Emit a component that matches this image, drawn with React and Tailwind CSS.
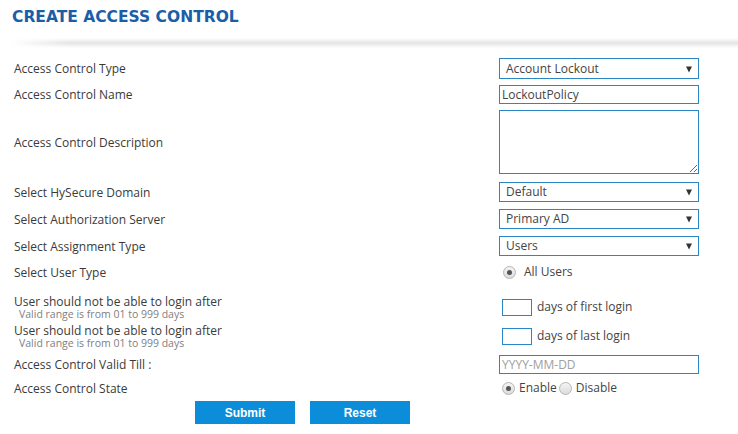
import React from "react";

const font = { fontFamily: "'Open Sans', 'Noto Sans', sans-serif" };

function Caret() {
  return (
    <svg width="8" height="8" viewBox="0 0 8 8" className="shrink-0">
      <path d="M1 1.5 H7 L4 7.5 Z" fill="#333" />
    </svg>
  );
}

function Select({ value }) {
  return (
    <div className="w-[200px] h-full border border-[#2b87c4] bg-white flex items-center justify-between pl-[6px] pr-[5px] text-[12px] text-[#444]">
      <span>{value}</span>
      <Caret />
    </div>
  );
}

function Radio({ checked }) {
  return (
    <span className="inline-flex w-[13px] h-[13px] rounded-full border border-[#b5b5b5] bg-gradient-to-b from-[#f4f4f4] to-[#dcdcdc] items-center justify-center shrink-0">
      {checked && <span className="w-[5px] h-[5px] rounded-full bg-[#555]" />}
    </span>
  );
}

function Row({ top, h, label, hint, children }) {
  return (
    <div className="flex items-center" style={{ marginTop: top, height: h }}>
      <div className="w-[499px] pl-[14px] text-[12px] text-[#3a3a3a]">
        <div className="leading-[13px]">{label}</div>
        {hint && (
          <div className="pl-[5px] pt-[1px] text-[10.5px] text-[#808080] leading-[11px]">{hint}</div>
        )}
      </div>
      <div className="flex items-center h-full">{children}</div>
    </div>
  );
}

export default function App() {
  return (
    <div className="w-[738px] h-[434px] bg-white overflow-hidden" style={font}>
      <div className="h-[38px] pl-[12px] pt-[6px]">
        <h1
          className="text-[15.5px] font-bold text-[#1a5ea8]"
          style={{ fontFamily: "'DejaVu Sans', Verdana, sans-serif" }}
        >
          CREATE ACCESS CONTROL
        </h1>
      </div>
      <div className="h-[10px] ml-[10px] bg-gradient-to-b from-white via-[#e4e4e4] to-white [mask-image:linear-gradient(to_right,transparent,black_60px)]" />
      <div className="flex flex-col">
        <Row top={10} h={21} label="Access Control Type">
          <Select value="Account Lockout" />
        </Row>
        <Row top={6} h={19} label="Access Control Name">
          <input
            readOnly
            defaultValue="LockoutPolicy"
            className="w-[200px] h-full border border-[#2b87c4] px-[2px] text-[12px] text-[#444] outline-none"
            style={font}
          />
        </Row>
        <Row top={6} h={64} label="Access Control Description">
          <textarea
            readOnly
            className="w-[200px] h-full border border-[#2b87c4] resize outline-none"
          />
        </Row>
        <Row top={8} h={20} label="Select HySecure Domain">
          <Select value="Default" />
        </Row>
        <Row top={7} h={20} label="Select Authorization Server">
          <Select value="Primary AD" />
        </Row>
        <Row top={7} h={20} label="Select Assignment Type">
          <Select value="Users" />
        </Row>
        <Row top={6} h={20} label="Select User Type">
          <div className="flex items-center pl-[4px] gap-[8px] text-[12px] text-[#444]">
            <Radio checked />
            <span>All Users</span>
          </div>
        </Row>
        <Row
          top={14}
          h={22}
          label="User should not be able to login after"
          hint="Valid range is from 01 to 999 days"
        >
          <div className="flex items-center pl-[3px] gap-[5px] text-[12px] text-[#444]">
            <input readOnly className="w-[30px] h-[17px] border border-[#2b87c4] outline-none" />
            <span>days of first login</span>
          </div>
        </Row>
        <Row
          top={7}
          h={22}
          label="User should not be able to login after"
          hint="Valid range is from 01 to 999 days"
        >
          <div className="flex items-center pl-[3px] gap-[5px] text-[12px] text-[#444]">
            <input readOnly className="w-[30px] h-[17px] border border-[#2b87c4] outline-none" />
            <span>days of last login</span>
          </div>
        </Row>
        <Row top={8} h={19} label="Access Control Valid Till :">
          <input
            readOnly
            placeholder="YYYY-MM-DD"
            className="w-[200px] h-full border border-[#2b87c4] px-[2px] text-[12px] text-[#444] placeholder:text-[#a0a0a0] outline-none"
            style={font}
          />
        </Row>
        <Row top={4} h={20} label="Access Control State">
          <div className="flex items-center pl-[3px] text-[12px] text-[#444]">
            <Radio checked />
            <span className="ml-[4px] mr-[2px]">Enable</span>
            <Radio />
            <span className="ml-[4px]">Disable</span>
          </div>
        </Row>
        <div className="flex mt-[3px] pl-[195px] gap-[15px]">
          <button
            className="w-[100px] h-[23px] bg-[#0b8dd9] text-white text-[12px] font-bold"
            style={{ fontFamily: "'Liberation Sans', Arial, sans-serif" }}
          >
            Submit
          </button>
          <button
            className="w-[100px] h-[23px] bg-[#0b8dd9] text-white text-[12px] font-bold"
            style={{ fontFamily: "'Liberation Sans', Arial, sans-serif" }}
          >
            Reset
          </button>
        </div>
      </div>
    </div>
  );
}
